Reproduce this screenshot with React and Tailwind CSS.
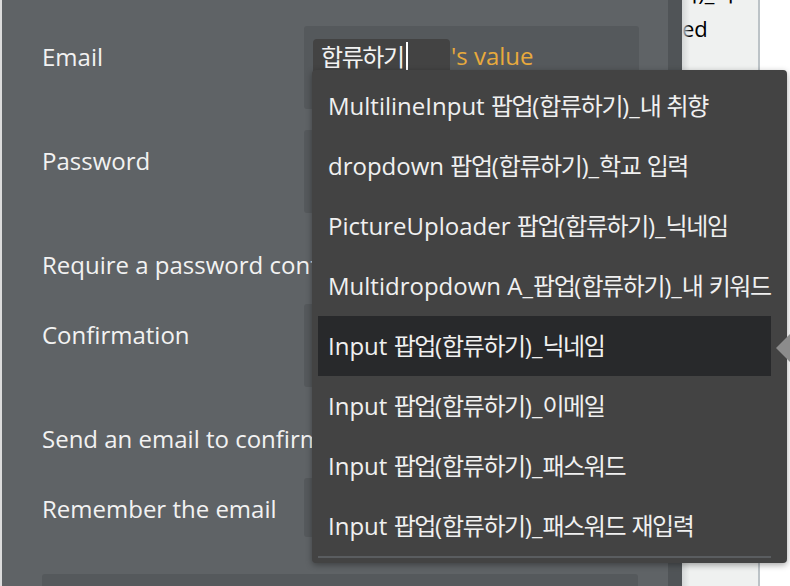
import React from "react"

const font = { fontFamily: '"Open Sans", "Noto Sans CJK KR", sans-serif' }

const options = [
    "MultilineInput 팝업(합류하기)_내 취향",
    "dropdown 팝업(합류하기)_학교 입력",
    "PictureUploader 팝업(합류하기)_닉네임",
    "Multidropdown A_팝업(합류하기)_내 키워드",
    "Input 팝업(합류하기)_닉네임",
    "Input 팝업(합류하기)_이메일",
    "Input 팝업(합류하기)_패스워드",
    "Input 팝업(합류하기)_패스워드 재입력",
]

// Hangul runs get slightly tighter spacing than the latin text around them
const Mixed = ({ text }) => (
    <span>
        {text.split(/([\uac00-\ud7a3]+)/).map((part, i) =>
            /[\uac00-\ud7a3]/.test(part) ? (
                <span key={i} className="tracking-[-1.4px]">
                    {part}
                </span>
            ) : (
                <span key={i}>{part}</span>
            )
        )}
    </span>
)

const Label = ({ children }) => (
    <div className="pl-[40px] text-[24px] leading-[32px] text-[#f2f2f2] whitespace-nowrap">{children}</div>
)

const FieldRow = ({ label, height, children }) => (
    <div className={`flex ${height}`}>
        <div className="w-[302px] shrink-0 pt-[15px] overflow-hidden">
            <Label>{label}</Label>
        </div>
        <div className="w-[335px] h-full rounded-[3px] bg-[#55595c] relative">{children}</div>
    </div>
)

const CheckRow = ({ label, height }) => (
    <div className={`flex ${height}`}>
        <div className="w-[310px] shrink-0 pt-[36px] overflow-hidden">
            <Label>{label}</Label>
        </div>
    </div>
)

const OptionList = () => (
    <div className="absolute left-[312px] top-[70px] w-[475px] h-[493px] rounded-[4px] bg-[#434343] shadow-[0_2px_6px_rgba(0,0,0,0.35)] pt-[6px] pl-[6px] pr-[16px]">
        {options.map((opt, i) => (
            <div
                key={opt}
                className={`h-[60px] flex items-center pl-[10px] text-[24px] text-[#f0f0f0] whitespace-nowrap ${i === 4 ? "bg-[#28292b]" : ""}`}
            >
                <Mixed text={opt} />
            </div>
        ))}
        <div className="h-[2px] bg-[#5a5d60]" />
    </div>
)

export default function App() {
    return (
        <div className="relative w-[790px] h-[586px] overflow-hidden flex bg-white" style={font}>
            <div className="w-[2px] bg-[#dcdcdc]" />

            {/* signup settings panel */}
            <div className="w-[666px] bg-[#5f6366] flex flex-col pt-[26px]">
                <FieldRow label="Email" height="h-[83px]">
                    <div className="flex items-end pt-[13px] pl-[9px]">
                        <div className="w-[137px] h-[40px] rounded-t-[4px] bg-[#434343] flex pl-[8px] pt-[2px]">
                            <span className="text-[24px] leading-[32px] text-[#f2f2f2] tracking-[-1.4px]">합류하기</span>
                            <span className="w-[2px] h-[29px] bg-white ml-[2px] mt-[1px]" />
                        </div>
                        <span className="self-start text-[24px] leading-[36px] text-[#e8aa3c] ml-[1px] mt-[-1px]">'s value</span>
                    </div>
                </FieldRow>
                <div className="h-[21px]" />
                <FieldRow label="Password" height="h-[83px]" />
                <CheckRow label="Require a password confirmation" height="h-[91px]" />
                <FieldRow label="Confirmation" height="h-[83px]" />
                <CheckRow label="Send an email to confirm the address" height="h-[91px]" />
                <FieldRow label="Remember the email" height="h-[59px]" />
                <div className="h-[37px]" />
                <div className="ml-[40px] w-[596px] flex-1 rounded-t-[3px] bg-[#55595c]" />
            </div>

            <div className="w-[14px] bg-[#505457]" />

            {/* page canvas peeking out on the right */}
            <div className="w-[76px] bg-[#eff1f0] overflow-hidden relative">
                <div className="absolute inset-y-0 left-0 w-[8px] bg-gradient-to-r from-[#d4d7d7] to-transparent" />
                <div className="mt-[-21px] text-[22px] text-black whitespace-nowrap">
                    <div className="ml-[-4px] leading-[26px] mb-[10px]">기)_미</div>
                    <div className="leading-[26px]">ed</div>
                </div>
            </div>
            <div className="w-[2px] bg-[#bcc3c7]" />
            <div className="flex-1 bg-white" />

            <OptionList />

            <svg className="absolute left-[776px] top-[332px]" width="16" height="32" viewBox="0 0 16 32">
                <polygon points="0,16 16,0 16,32" fill="#8c8c8c" />
            </svg>
        </div>
    )
}
